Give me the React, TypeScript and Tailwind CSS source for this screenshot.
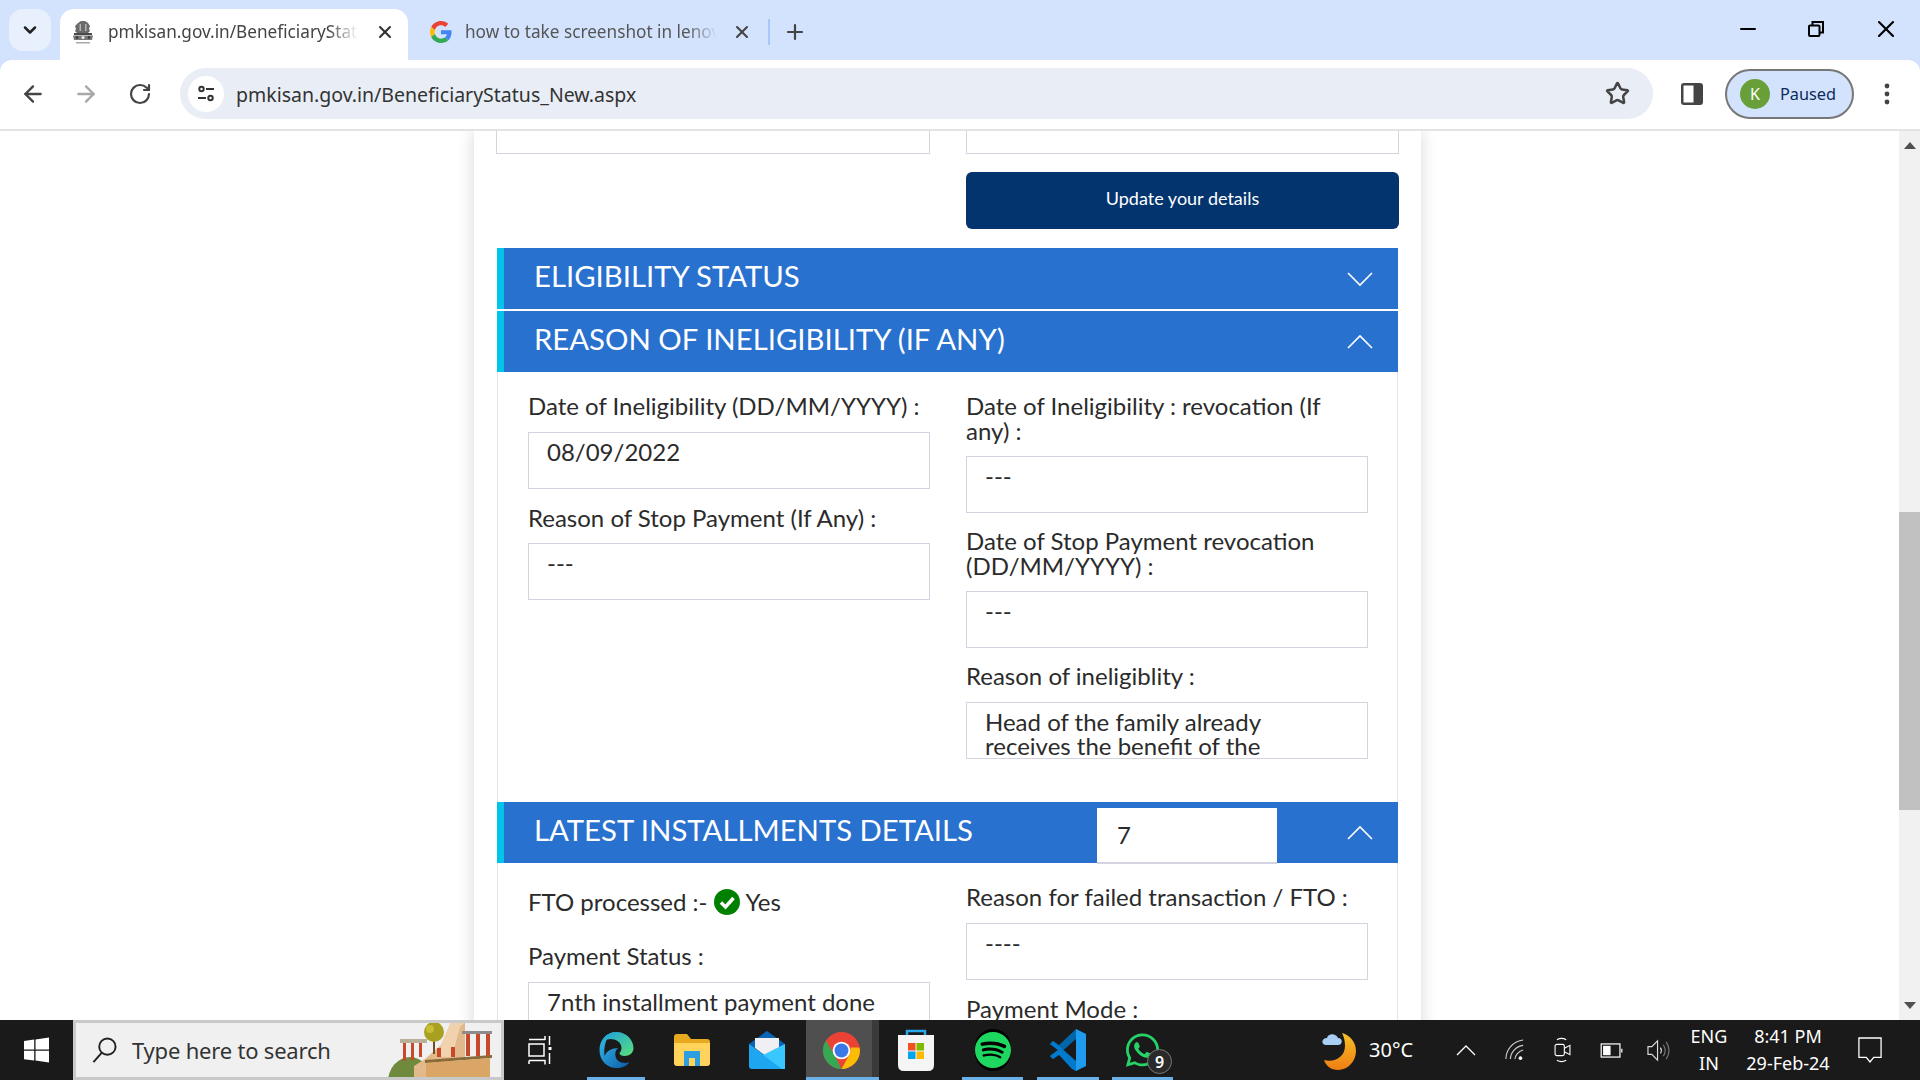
import { ArrowLeft, ArrowRight, RotateCw, Star, X, Plus, ChevronDown, Minus } from 'lucide-react';
import { FaSpotify, FaWhatsapp } from 'react-icons/fa';
import type { ReactNode } from 'react';

const chromeFont = 'font-["Noto_Sans",sans-serif]';

function GoogleG() {
  return (
    <svg viewBox="0 0 48 48" className="w-[22px] h-[22px]">
      <path fill="#EA4335" d="M24 9.5c3.5 0 6.700 1.200 9.200 3.600l6.900-6.900C35.900 2.400 30.500 0 24 0 14.600 0 6.500 5.400 2.600 13.200l8 6.200C12.500 13.600 17.800 9.500 24 9.500z" />
      <path fill="#4285F4" d="M47 24.500c0-1.600-.1-3.100-.4-4.500H24v9h12.900c-.6 3-2.200 5.500-4.700 7.200l7.700 6C44.400 38 47 31.800 47 24.500z" />
      <path fill="#FBBC05" d="M10.600 28.600c-.5-1.400-.8-3-.8-4.600s.3-3.200.8-4.600l-8-6.200C.9 16.500 0 20.100 0 24s.9 7.500 2.600 10.800l8-6.200z" />
      <path fill="#34A853" d="M24 48c6.500 0 11.900-2.100 15.900-5.800l-7.700-6c-2.100 1.400-4.900 2.300-8.200 2.300-6.200 0-11.500-4.100-13.400-9.900l-8 6.200C6.500 42.600 14.600 48 24 48z" />
    </svg>
  );
}

// national emblem favicon, just blobs at this size
function Emblem() {
  return (
    <svg viewBox="0 0 22 24" className="w-[22px] h-[24px]">
      <path fill="#6a6a6a" d="M6 3l3-2h4l3 2 2 3-1 3 1 2-2 2H5l-2-2 1-2-1-3z" />
      <path fill="#b5b5b5" d="M7.500 4h1.500v7H7.500zM13 4h1.500v7H13z" />
      <rect x="2" y="13" width="18" height="2" fill="#4a4a4a" />
      <path fill="#777" d="M1 15.500h20L20 20H2z" />
      <circle cx="11" cy="17.500" r="1.600" fill="#e8e8e8" />
      <circle cx="5" cy="17.500" r="1.200" fill="#333" />
      <circle cx="17" cy="17.500" r="1.200" fill="#333" />
      <rect x="4" y="22" width="14" height="1.500" fill="#aaa" />
    </svg>
  );
}

function SiteInfo() {
  return (
    <svg viewBox="0 0 20 20" className="w-5 h-5" fill="none" stroke="#333" strokeWidth="2">
      <circle cx="5.500" cy="5" r="2.200" />
      <path d="M10 5h8M2 14h8" />
      <circle cx="14.500" cy="14" r="2.200" />
    </svg>
  );
}

function PanelChevron({ up }: { up?: boolean }) {
  return (
    <svg viewBox="0 0 26 16" className="w-[26px] h-4" fill="none" stroke="#fff" strokeWidth="1.600">
      <path d={up ? 'M1 14L13 2l12 12' : 'M1 2l12 12L25 2'} />
    </svg>
  );
}

function SectionHeader({ title, up, children }: { title: string; up?: boolean; children?: ReactNode }) {
  return (
    <div className="relative h-[61px] flex items-center bg-[#2971cf] border-l-[7px] border-[#00c4e9] pl-[30px] pr-[25px] text-white">
      <span className="text-[29.300px] leading-none -translate-y-[3px]">{title}</span>
      {children}
      <span className="ml-auto"><PanelChevron up={up} /></span>
    </div>
  );
}

function Field({ label, value }: { label: string; value: ReactNode }) {
  return (
    <div>
      <div className="text-[24px] leading-[24.500px] text-[#2b2b2b]">{label}</div>
      <ValueBox>{value}</ValueBox>
    </div>
  );
}

function ValueBox({ children }: { children: ReactNode }) {
  return (
    <div className="mt-[13px] h-[57px] overflow-hidden border border-[#d4d4e0] bg-white pl-[18px] pr-[30px] pt-[7px] text-[24px] leading-[24.500px] text-[#2b2b2b]">
      {children}
    </div>
  );
}

function Browser() {
  return (
    <>
      <div className={`h-[60px] bg-[#d3e3fd] flex items-end pl-[9px] relative ${chromeFont}`}>
        <div className="mb-[9px] w-[42px] h-[42px] rounded-[14px] bg-[#e8f0fe] flex items-center justify-center">
          <ChevronDown size={20} strokeWidth={3} color="#222" />
        </div>
        <div className="ml-[9px] w-[348px] h-[51px] bg-white rounded-t-[14px] flex items-center pl-[12px] pb-[6px]">
          <Emblem />
          <span className="ml-[14px] w-[250px] whitespace-nowrap overflow-hidden text-[17.200px] text-[#444] [mask-image:linear-gradient(90deg,#000_88%,transparent)]">pmkisan.gov.in/BeneficiaryStatus_New.aspx</span>
          <X size={20} strokeWidth={2.500} color="#333" className="ml-[17px]" />
        </div>
        <div className="ml-[22px] h-[51px] flex items-center pb-[6px]">
          <GoogleG />
          <span className="ml-[13px] w-[252px] whitespace-nowrap overflow-hidden text-[17.200px] text-[#555] [mask-image:linear-gradient(90deg,#000_88%,transparent)]">how to take screenshot in lenovo</span>
          <X size={20} strokeWidth={2.500} color="#444" className="ml-[15px]" />
          <div className="ml-[16px] w-[2px] h-[26px] bg-[#a8c7fa]" />
          <Plus size={24} strokeWidth={2.200} color="#444" className="ml-[13px]" />
        </div>
        <div className="ml-auto h-[60px] flex items-center pr-[20px] gap-[48px] pb-[2px]">
          <Minus size={24} strokeWidth={2} color="#000" />
          <svg viewBox="0 0 16 16" className="w-4 h-4" fill="none" stroke="#000" strokeWidth="2">
            <rect x="1" y="4.500" width="10.500" height="10.500" rx="1" />
            <path d="M4.500 4.500V1H15v10.500h-3.500" />
          </svg>
          <X size={28} strokeWidth={1.800} color="#000" />
        </div>
      </div>
      <div className={`h-[71px] bg-white rounded-t-[12px] border-b-2 border-[#e3e3e3] flex items-center pb-[2px] ${chromeFont}`}>
        <ArrowLeft size={26} strokeWidth={2.200} color="#444" className="ml-[20px]" />
        <ArrowRight size={26} strokeWidth={2.200} color="#a8a8a8" className="ml-[27px]" />
        <RotateCw size={24} strokeWidth={2.200} color="#444" className="ml-[29px]" />
        <div className="ml-[28px] w-[1473px] h-[51px] rounded-full bg-[#e9eef6] flex items-center pl-[8px]">
          <div className="w-9 h-9 rounded-full bg-white flex items-center justify-center"><SiteInfo /></div>
          <span className="ml-[12px] text-[19.500px] text-[#333] translate-y-[1px]">pmkisan.gov.in/BeneficiaryStatus_New.aspx</span>
          <Star size={25} strokeWidth={2.400} color="#444" className="ml-auto mr-[23px]" />
        </div>
        <svg viewBox="0 0 22 22" className="w-[22px] h-[22px] ml-[28px]">
          <rect x="0" y="0" width="22" height="22" rx="3" fill="#444" />
          <rect x="2.500" y="2.500" width="10" height="17" fill="#fff" />
        </svg>
        <div className="ml-[22px] w-[129px] h-[50px] rounded-full border-2 border-[#777] bg-[#d3e3fd] flex items-center pl-[13px]">
          <div className="w-[30px] h-[30px] rounded-full bg-[#689f38] text-white text-[16px] flex items-center justify-center">K</div>
          <span className="ml-[10px] text-[16.300px] text-[#0b2a5b] translate-y-[1px]">Paused</span>
        </div>
        <svg viewBox="0 0 6 22" className="w-[6px] h-[22px] ml-[30px]" fill="#444">
          <circle cx="3" cy="3" r="2.400" />
          <circle cx="3" cy="11" r="2.400" />
          <circle cx="3" cy="19" r="2.400" />
        </svg>
      </div>
    </>
  );
}

function Page() {
  return (
    <div className="h-[889px] flex overflow-hidden bg-white font-['Lato',sans-serif]">
      <div className="flex-1 pl-[474px] overflow-hidden">
        <div className="w-[947px] min-h-[1000px] bg-white px-[22px] shadow-[0_0_16px_rgba(0,0,0,0.16)]">
          <div className="grid grid-cols-[434px_433px] gap-x-[36px]">
            <div className="h-[23px] border border-t-0 border-[#d4d4e0]" />
            <div className="h-[23px] border border-t-0 border-[#d4d4e0]" />
            <div />
            <div className="mt-[18px] h-[57px] rounded-[6px] bg-[#03346e] text-white text-[18px] flex items-center justify-center pb-[4px]">Update your details</div>
          </div>
          <div className="mt-[19px] w-[901px] ml-[1px]">
            <SectionHeader title="ELIGIBILITY STATUS" />
            <div className="mt-[2px]"><SectionHeader title="REASON OF INELIGIBILITY (IF ANY)" up /></div>
            <div className="h-[430px] border-x border-[#e4e4ec] grid grid-cols-[402px_402px] gap-x-[36px] pl-[30px] pt-[22px]">
              <div className="flex flex-col gap-[17px]">
                <Field label="Date of Ineligibility (DD/MM/YYYY) :" value="08/09/2022" />
                <Field label="Reason of Stop Payment (If Any) :" value="---" />
              </div>
              <div className="flex flex-col gap-[16px]">
                <Field label="Date of Ineligibility : revocation (If any) :" value="---" />
                <Field label="Date of Stop Payment revocation (DD/MM/YYYY) :" value="---" />
                <Field label="Reason of ineligiblity :" value="Head of the family already receives the benefit of the scheme" />
              </div>
            </div>
            <SectionHeader title="LATEST INSTALLMENTS DETAILS" up>
              <div className="absolute left-[593px] top-[6px] w-[180px] h-[56px] bg-white border-b-2 border-[#d4d4e0] text-[#2b2b2b] text-[24px] pl-[20px] pt-[13px] leading-[28px]">7</div>
            </SectionHeader>
            <div className="border-x border-[#e4e4ec] grid grid-cols-[402px_402px] gap-x-[36px] pl-[30px]">
              <div className="pt-[25px]">
                <div className="h-[28px] flex items-center text-[24px] text-[#2b2b2b]">
                  FTO processed :-
                  <svg viewBox="0 0 26 26" className="w-[26px] h-[26px] ml-[6px]">
                    <circle cx="13" cy="13" r="13" fill="#008000" />
                    <path d="M7 13.500l4.500 4.500L19.500 9" fill="none" stroke="#fff" strokeWidth="3.500" />
                  </svg>
                  <span className="ml-[6px]">Yes</span>
                </div>
                <div className="mt-[28px] text-[24px] leading-[24.500px] text-[#2b2b2b]">Payment Status :</div>
                <div className="mt-[13px] h-[57px] border border-[#d4d4e0] pl-[18px] pt-[7px] text-[24px] leading-[24.500px] text-[#2b2b2b]">7nth installment payment done</div>
              </div>
              <div className="pt-[22px]">
                <Field label="Reason for failed transaction / FTO :" value="----" />
                <div className="mt-[17px] text-[24px] leading-[24.500px] text-[#2b2b2b]">Payment Mode :</div>
              </div>
            </div>
          </div>
        </div>
      </div>
      <div className="relative w-[21px] bg-[#f1f1f1] flex flex-col items-center">
        <div className="mt-[11px] w-0 h-0 border-x-[6px] border-x-transparent border-b-[7px] border-b-[#505050]" />
        <div className="absolute top-[381px] left-0 w-full h-[298px] bg-[#c1c1c1]" />
        <div className="mt-auto mb-[11px] w-0 h-0 border-x-[6px] border-x-transparent border-t-[7px] border-t-[#505050]" />
      </div>
    </div>
  );
}

function TaskIcon({ children, w, active, hl }: { children: ReactNode; w: number; active?: boolean; hl?: boolean }) {
  return (
    <div className={`relative h-[60px] flex items-center justify-center shrink-0 ${hl ? 'bg-[#4f4f4f]' : ''}`} style={{ width: w }}>
      {children}
      {active && <div className="absolute bottom-0 left-0 right-0 h-[3px] bg-[#6cb0e8]" />}
    </div>
  );
}

function SearchArt() {
  return (
    <svg viewBox="0 0 104 57" className="absolute right-[9px] bottom-0 w-[104px] h-[57px]">
      <ellipse cx="22" cy="62" rx="22" ry="25" fill="#6f8a3c" />
      <path fill="#e2b98a" d="M26 57V46l11-7 16-14 10-23 14-1v37H62v19z" />
      <path fill="#f0d3ae" d="M53 25L63 2h14l-5 5-8 30H53z" />
      <rect x="12" y="19" width="27" height="4" fill="#b9b09a" />
      <rect x="15" y="23" width="3" height="18" fill="#c8492a" />
      <rect x="23" y="23" width="3" height="17" fill="#c8492a" />
      <rect x="31" y="23" width="3" height="14" fill="#c8492a" />
      <rect x="45" y="14" width="2" height="20" fill="#6b4e22" />
      <circle cx="46" cy="12" r="10" fill="#a8a020" />
      <circle cx="42" cy="9" r="4" fill="#c9bd35" />
      <rect x="74" y="11" width="30" height="3" fill="#8f8b8c" />
      <rect x="78" y="14" width="4" height="22" fill="#c8492a" />
      <rect x="88" y="14" width="4" height="22" fill="#c8492a" />
      <rect x="98" y="14" width="4" height="22" fill="#c8492a" />
      <rect x="49" y="28" width="4" height="9" fill="#c8492a" />
      <rect x="63" y="27" width="4" height="10" fill="#c8492a" />
      <path fill="#8b6a3a" d="M37 40l67-5v3l-67 5z" />
      <path fill="#d9a666" d="M38 43l64-5v19H38z" />
    </svg>
  );
}

function Taskbar() {
  return (
    <div className="h-[60px] bg-[#1a1a1a] flex items-center font-['Noto_Sans',sans-serif] overflow-hidden">
      <div className="w-[73px] flex items-center justify-center">
        <svg viewBox="0 0 26 26" className="w-[25px] h-[26px]" fill="#fff">
          <path d="M0 3.700L10.600 2.200V12.400H0zM12 2L26 0V12.400H12zM0 13.800H10.600V24L0 22.500zM12 13.800H26V26L12 24z" />
        </svg>
      </div>
      <div className="relative w-[431px] h-[60px] bg-[#f0f0f0] border-[3px] border-[#c9c9c9] flex items-center pl-[16px] overflow-hidden">
        <svg viewBox="0 0 26 28" className="w-[25px] h-[27px]" fill="none" stroke="#222" strokeWidth="2">
          <circle cx="16" cy="10" r="8.500" />
          <path d="M10 16.500L1.500 26" />
        </svg>
        <span className="ml-[15px] text-[22px] text-[#333] tracking-[-0.2px]">Type here to search</span>
        <SearchArt />
      </div>
      <div className="w-[72px] flex items-center justify-center">
        <svg viewBox="0 0 24 30" className="w-[24px] h-[30px]" fill="none" stroke="#fff" strokeWidth="1.500">
          <path d="M1 4.500h16M17 1v4M1 9h15v12H1zM1 25.500h16v4M1 29v-3.500M21.500 1v9M21.500 18v11" />
          <rect x="20.500" y="12" width="3" height="3" fill="#fff" stroke="none" />
        </svg>
      </div>
      <div className="w-[11px]" />
      <TaskIcon w={58} active>
        <svg viewBox="0 0 36 38" className="w-[37px] h-[38px]">
          <defs>
            <linearGradient id="edgeA" x1="0" y1="0" x2="1" y2="1"><stop offset="0" stopColor="#35c1f1" /><stop offset="1" stopColor="#0c59a4" /></linearGradient>
            <linearGradient id="edgeB" x1="0" y1="0" x2="1" y2="1"><stop offset="0" stopColor="#1b9de2" /><stop offset="1" stopColor="#5ae07a" /></linearGradient>
          </defs>
          <path fill="url(#edgeA)" d="M18 1C8 1 1 9 1 19c0 11 8 18 17 18 6 0 10-2 13-6-5 2-13 1-14-6-1-6 3-8 3-8-7 0-12 3-14 8C5 9 11 2 18 1z" />
          <path fill="url(#edgeB)" d="M18 1c10 0 17 8 17 16 0 5-4 8-9 8-3 0-5-1-5-3 1-1 2-3 2-5 0-6-6-9-11-9C8 8 4 11 2 14 4 6 10 1 18 1z" />
        </svg>
      </TaskIcon>
      <div className="w-[28px]" />
      <TaskIcon w={38}>
        <svg viewBox="0 0 36 32" className="w-[36px] h-[32px]">
          <path fill="#e8a820" d="M0 3q0-3 3-3h10l4 5h16q3 0 3 3v4H0z" />
          <path fill="#ffd35c" d="M0 9h36v20q0 3-3 3H3q-3 0-3-3z" />
          <rect x="10" y="17" width="16" height="15" fill="#2b9fe0" />
          <rect x="15" y="24" width="6" height="8" fill="#ffd35c" />
        </svg>
      </TaskIcon>
      <div className="w-[37px]" />
      <TaskIcon w={38}>
        <svg viewBox="0 0 36 38" className="w-[36px] h-[38px]">
          <path fill="#0a64b8" d="M18 0l18 13v4H0v-4z" />
          <path fill="#f0f0f4" d="M6 7h24v10l-12 9-12-9z" />
          <path fill="#1ea7f0" d="M0 13l18 13 18-13v22q0 3-3 3H3q-3 0-3-3z" />
          <path fill="#38c8ff" d="M36 13v25H33L14 24z" />
        </svg>
      </TaskIcon>
      <div className="w-[20px]" />
      <TaskIcon w={66} active hl>
        <svg viewBox="0 0 48 48" className="w-[37px] h-[43px] translate-x-[2px]">
          <circle cx="24" cy="24" r="24" fill="#ea4335" />
          <path fill="#34a853" d="M24 48C10.700 48 0 37.300 0 24 0 18.500 2 14 4 11l13 23 7 14z" />
          <path fill="#fbbc04" d="M48 24c0 13.300-10.700 24-24 24l11-20 1-8h11c.6 1.300 1 2.800 1 4z" />
          <circle cx="24" cy="24" r="11.500" fill="#fff" />
          <circle cx="24" cy="24" r="9" fill="#3b78e7" />
        </svg>
      </TaskIcon>
      <div className="w-[7px] h-[60px] bg-[#3a3a3a] relative"><div className="absolute bottom-0 left-0 right-0 h-[3px] bg-[#6cb0e8]" /></div>
      <div className="w-[16px]" />
      <TaskIcon w={42}>
        <svg viewBox="0 0 36 42" className="w-[36px] h-[42px]">
          <path fill="none" stroke="#2aa7e8" strokeWidth="2.500" d="M9 10V2h18v8" />
          <path fill="#f5f5f5" d="M0 6h36v30q0 6-6 6H6q-6 0-6-6z" />
          <rect x="10" y="14" width="7.500" height="7.500" fill="#f25022" />
          <rect x="18.500" y="14" width="7.500" height="7.500" fill="#7fba00" />
          <rect x="10" y="22.500" width="7.500" height="7.500" fill="#00a4ef" />
          <rect x="18.500" y="22.500" width="7.500" height="7.500" fill="#ffb900" />
        </svg>
      </TaskIcon>
      <div className="w-[25px]" />
      <TaskIcon w={61} active>
        <div className="relative w-[36px] h-[42px] rounded-full bg-black flex items-center justify-center">
          <FaSpotify color="#1ed760" className="w-[36px] h-[42px]" />
        </div>
      </TaskIcon>
      <div className="w-[14px]" />
      <TaskIcon w={62} active>
        <svg viewBox="0 0 36 42" className="w-[36px] h-[42px]">
          <path fill="#1f9cf0" d="M26 0l10 5v32l-10 5z" />
          <path fill="#0065a9" d="M26 0v10L9 25l-6 5-3-3 8-6-8-6 3-3 6 4z" />
          <path fill="#007acc" d="M26 42V32L9 17l-6-5-3 3 8 6-8 6 3 3 6-4L22 40z" />
        </svg>
      </TaskIcon>
      <div className="w-[13px]" />
      <TaskIcon w={61} active>
        <FaWhatsapp color="#25d366" className="w-[37px] h-[38px]" />
        <div className="absolute left-[35px] top-[29px] w-[25px] h-[25px] rounded-full bg-[#2a2a2a] border border-[#777] text-white text-[16px] font-semibold flex items-center justify-center">9</div>
      </TaskIcon>
      <div className="ml-auto flex items-center text-white h-[60px]">
        <svg viewBox="0 0 34 40" className="w-[34px] h-[40px]">
          <defs><linearGradient id="moon" x1="0" y1="0" x2="0" y2="1"><stop offset="0" stopColor="#f5c227" /><stop offset="1" stopColor="#ef7d12" /></linearGradient></defs>
          <path fill="url(#moon)" d="M20 3c8 2 14 9 14 18 0 10-8 19-18 19-7 0-12-4-14-10 10 3 21-3 21-14 0-5-1-9-3-13z" />
          <path fill="#a9cdf3" d="M4 15c-5 0-5-7 1-7 1-5 9-5 11 0 5 0 5 7 0 7z" />
        </svg>
        <span className="ml-[13px] w-[48px] text-[20px]">30°C</span>
        <svg viewBox="0 0 20 12" className="ml-[39px] w-[20px] h-[12px]" fill="none" stroke="#fff" strokeWidth="1.300"><path d="M1 11l9-9 9 9" /></svg>
        <svg viewBox="0 0 22 24" className="ml-[29px] w-[20px] h-[22px]" fill="none" stroke="#ccc" strokeWidth="1.300">
          <path d="M1 22C1 12 9 2 20 1M6 22c0-7 6-14 14-15M11 22c0-4 4-9 9-10" />
          <circle cx="17" cy="21" r="2" fill="#fff" stroke="none" />
        </svg>
        <svg viewBox="0 0 18 28" className="ml-[29px] w-[17px] h-[26px]" fill="none" stroke="#fff" strokeWidth="1.200">
          <rect x="1" y="8" width="10" height="12" rx="2" />
          <path d="M11 12l6-3v10l-6-3M3 3q5-3 10 0M3 25q5 3 10 0" />
        </svg>
        <svg viewBox="0 0 24 16" className="ml-[29px] w-[23px] h-[15px]" fill="none" stroke="#fff" strokeWidth="1.300">
          <rect x="1" y="1" width="20" height="14" />
          <rect x="3" y="3" width="8" height="10" fill="#fff" stroke="none" />
          <path d="M23 6v4" />
        </svg>
        <svg viewBox="0 0 24 24" className="ml-[24px] w-[23px] h-[23px]" fill="none" stroke="#ddd" strokeWidth="1.200">
          <path d="M1 8h4l6-6v20l-6-6H1zM14 9q2 3 0 6" />
          <path d="M17 6q4 6 0 12M20 3q6 9 0 18" stroke="#777" />
        </svg>
        <div className="ml-[19px] w-[40px] text-center text-[18px] leading-[27px]">ENG<br />IN</div>
        <div className="ml-[14px] w-[90px] text-center text-[18px] leading-[27px] whitespace-nowrap">8:41 PM<br />29-Feb-24</div>
        <svg viewBox="0 0 26 28" className="ml-[25px] mr-[38px] w-[24px] h-[26px]" fill="none" stroke="#fff" strokeWidth="1.400">
          <path d="M1 1h24v21h-8l-4 5-4-5H1z" />
        </svg>
      </div>
    </div>
  );
}

export default function App() {
  return (
    <div className="w-[1920px] h-[1080px] overflow-hidden bg-[#d3e3fd]">
      <Browser />
      <Page />
      <Taskbar />
    </div>
  );
}
